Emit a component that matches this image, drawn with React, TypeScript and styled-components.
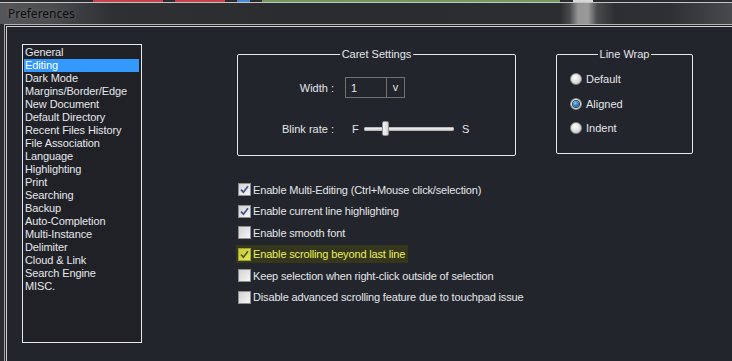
import React from "react";
import styled, { createGlobalStyle } from "styled-components";

const Global = createGlobalStyle`
  html, body { margin: 0; padding: 0; background: #22252b; }
  #root { width: 732px; height: 361px; overflow: hidden; }
`;

const Root = styled.div`
  width: 732px;
  height: 361px;
  overflow: hidden;
  display: flex;
  flex-direction: column;
  background: #2a2b2f;
  font-family: "Liberation Sans", Arial, sans-serif;
  font-size: 11px;
  color: #e4e6ea;
`;

const TopStrip = styled.div`
  height: 2px;
  flex: none;
  background: linear-gradient(
    90deg,
    #2c2c2e 0, #2c2c2e 93px,
    #c8404c 93px, #c8404c 163px,
    #2c2c2e 163px, #2c2c2e 175px,
    #c8404c 175px, #c8404c 225px,
    #2c2c2e 225px, #2c2c2e 237px,
    #4a86d8 237px, #4a86d8 250px,
    #2c2c2e 250px, #2c2c2e 262px,
    #6f9a5a 262px, #6f9a5a 560px,
    #2c2c2e 560px, #2c2c2e 573px,
    #d8d8d8 573px, #d8d8d8 593px,
    #2c2c2e 593px
  );
`;

const TopLine = styled.div`
  height: 1px;
  flex: none;
  background: #c4c4c4;
`;

const TitleBar = styled.div`
  height: 21px;
  flex: none;
  display: flex;
  align-items: center;
  padding-left: 8px;
  background: linear-gradient(
    90deg,
    #555659 0, #4c4d50 50px, #3a3b3f 85px, #2f3034 115px,
    #2a2c30 300px, #2b2d31 560px,
    #4a4b4e 570px, #969696 578px, #9a9a9a 588px,
    #4a4b4e 597px, #2c2e32 615px,
    #2e3034 670px, #48494c 732px
  );
`;

const Title = styled.span`
  font-family: "Noto Sans", "Liberation Sans", sans-serif;
  font-size: 12px;
  color: #0c0c0c;
  text-shadow: 0 0 5px rgba(255, 255, 255, 0.18);
`;

const Frame = styled.div`
  flex: 1;
  display: flex;
  margin-left: 4px;
  border-top: 1px solid #b4b4b4;
  border-left: 1px solid #a8a8a8;
  padding: 1px 0 0 1px;
  background: #1d1e22;
`;

const Client = styled.div`
  flex: 1;
  display: flex;
  align-items: flex-start;
  border-top: 1px solid #d2d2d2;
  border-left: 1px solid #cfcfcf;
  background: #22252b;
  padding: 17px 0 0 15px;
`;

const ListBox = styled.ul`
  list-style: none;
  margin: 0;
  width: 120px;
  height: 299px;
  box-sizing: border-box;
  border: 1px solid #e9e9e9;
  background: #1f2127;
  padding: 1px 2px 0 1px;
  flex: none;
  letter-spacing: -0.1px;
`;

const ListItem = styled.li<{ $selected?: boolean }>`
  height: 13px;
  line-height: 13px;
  padding-left: 1px;
  white-space: nowrap;
  color: ${(p) => (p.$selected ? "#ffffff" : "#e6e8ec")};
  background: ${(p) => (p.$selected ? "#3399ff" : "transparent")};
`;

const RightPane = styled.div`
  display: flex;
  flex-direction: column;
  margin-left: 95px;
  margin-top: 10px;
`;

const TopRow = styled.div`
  display: flex;
  align-items: flex-start;
  gap: 40px;
`;

const GroupBox = styled.div<{ $w: number; $h: number }>`
  position: relative;
  box-sizing: border-box;
  width: ${(p) => p.$w}px;
  height: ${(p) => p.$h}px;
  border: 1px solid #e8e8e8;
  border-radius: 2px;
`;

const Legend = styled.span`
  position: absolute;
  top: -7px;
  left: 50%;
  transform: translateX(-50%);
  padding: 0 2px;
  line-height: 13px;
  background: #22252b;
  white-space: nowrap;
`;

const CaretGrid = styled.div`
  display: grid;
  grid-template-columns: 96px auto;
  grid-template-rows: 21px 15px;
  column-gap: 11px;
  row-gap: 23px;
  padding-top: 22px;
`;

const FieldLabel = styled.span`
  align-self: center;
  text-align: right;
  white-space: nowrap;
`;

const Dropdown = styled.div`
  display: flex;
  width: 60px;
  height: 21px;
  box-sizing: border-box;
  border: 1px solid #707070;
`;

const DropValue = styled.span`
  width: 41px;
  padding-left: 5px;
  box-sizing: border-box;
  display: flex;
  align-items: center;
  border-right: 1px solid #707070;
`;

const DropArrow = styled.span`
  flex: 1;
  display: flex;
  align-items: center;
  justify-content: center;
  padding-bottom: 1px;
`;

const SliderRow = styled.div`
  display: flex;
  align-items: center;
`;

const SliderEnd = styled.span<{ $w: number; $ml: number }>`
  width: ${(p) => p.$w}px;
  margin-left: ${(p) => p.$ml}px;
  flex: none;
`;

const Slider = styled.div`
  position: relative;
  width: 90px;
  height: 15px;
  display: flex;
  align-items: center;
  flex: none;
`;

const Track = styled.div`
  width: 100%;
  height: 4px;
  box-sizing: border-box;
  background: linear-gradient(#f2f2f2, #cfcfcf);
  border: 1px solid #b8b8b8;
  border-radius: 1px;
`;

const Thumb = styled.div`
  position: absolute;
  top: 0;
  width: 7px;
  height: 15px;
  box-sizing: border-box;
  border: 1px solid #8c8c8c;
  border-radius: 2px;
  background: linear-gradient(90deg, #f6f6f6, #d6d6d6);
`;

const RadioList = styled.div`
  display: flex;
  flex-direction: column;
  gap: 12.5px;
  padding: 18px 0 0 13px;
`;

const RadioRow = styled.label`
  display: flex;
  align-items: center;
  gap: 4px;
  height: 12px;
  white-space: nowrap;
`;

const RadioDot = styled.span<{ $on?: boolean }>`
  width: 12px;
  height: 12px;
  box-sizing: border-box;
  border-radius: 50%;
  border: 1px solid #8a8a8a;
  background: radial-gradient(circle at 40% 35%, #ffffff 0, #e6e6e6 40%, #bdbdbd 100%);
  display: flex;
  align-items: center;
  justify-content: center;
  flex: none;
  &::after {
    content: "";
    display: ${(p) => (p.$on ? "block" : "none")};
    width: 6px;
    height: 6px;
    border-radius: 50%;
    background: radial-gradient(circle at 40% 35%, #7fd0ff 0, #2a86c8 45%, #0e3f6e 100%);
    box-shadow: 0 0 0 1px #3a4a5a;
  }
`;

const CheckList = styled.div`
  display: flex;
  flex-direction: column;
  margin-top: 23px;
`;

const CheckRow = styled.div`
  height: 21.5px;
  display: flex;
  align-items: center;
`;

const Check = styled.label<{ $hl?: boolean }>`
  display: inline-flex;
  align-items: center;
  gap: 2px;
  height: 18px;
  white-space: nowrap;
  letter-spacing: -0.15px;
  padding: 0 3px 0 2px;
  margin-left: -1px;
  background: ${(p) => (p.$hl ? "#34371b" : "transparent")};
  color: ${(p) => (p.$hl ? "#eeee5a" : "#e4e6ea")};
`;

const Box = styled.span<{ $hl?: boolean }>`
  width: 13px;
  height: 13px;
  box-sizing: border-box;
  border: 1px solid ${(p) => (p.$hl ? "#a0a032" : "#8e8e8e")};
  background: ${(p) =>
    p.$hl
      ? "linear-gradient(135deg, #c8c83a, #e6e65a)"
      : "linear-gradient(135deg, #d2d2d2, #f6f6f6)"};
  display: flex;
  align-items: center;
  justify-content: center;
  flex: none;
`;

const CheckMark = ({ hl }: { hl?: boolean }) => (
  <svg width="9" height="9" viewBox="0 0 9 9">
    <path
      d="M1 4.6 L3.4 7.2 L8 1.2"
      fill="none"
      stroke={hl ? "#5a5a18" : "#3e5489"}
      strokeWidth="1.7"
    />
  </svg>
);

const items = [
  "General",
  "Editing",
  "Dark Mode",
  "Margins/Border/Edge",
  "New Document",
  "Default Directory",
  "Recent Files History",
  "File Association",
  "Language",
  "Highlighting",
  "Print",
  "Searching",
  "Backup",
  "Auto-Completion",
  "Multi-Instance",
  "Delimiter",
  "Cloud & Link",
  "Search Engine",
  "MISC.",
];

const checks = [
  { text: "Enable Multi-Editing (Ctrl+Mouse click/selection)", on: true },
  { text: "Enable current line highlighting", on: true },
  { text: "Enable smooth font", on: false },
  { text: "Enable scrolling beyond last line", on: true, hl: true },
  { text: "Keep selection when right-click outside of selection", on: false },
  { text: "Disable advanced scrolling feature due to touchpad issue", on: false },
];

export default function App() {
  return (
    <Root>
      <Global />
      <TopStrip />
      <TopLine />
      <TitleBar>
        <Title>Preferences</Title>
      </TitleBar>
      <Frame>
        <Client>
          <ListBox>
            {items.map((it) => (
              <ListItem key={it} $selected={it === "Editing"}>
                {it}
              </ListItem>
            ))}
          </ListBox>
          <RightPane>
            <TopRow>
              <GroupBox $w={279} $h={102}>
                <Legend>Caret Settings</Legend>
                <CaretGrid>
                  <FieldLabel>Width :</FieldLabel>
                  <Dropdown>
                    <DropValue>1</DropValue>
                    <DropArrow>v</DropArrow>
                  </Dropdown>
                  <FieldLabel>Blink rate :</FieldLabel>
                  <SliderRow>
                    <SliderEnd $w={12} $ml={7}>F</SliderEnd>
                    <Slider>
                      <Track />
                      <Thumb style={{ left: 18 }} />
                    </Slider>
                    <SliderEnd $w={10} $ml={8}>S</SliderEnd>
                  </SliderRow>
                </CaretGrid>
              </GroupBox>
              <GroupBox $w={137} $h={100}>
                <Legend>Line Wrap</Legend>
                <RadioList>
                  <RadioRow>
                    <RadioDot />
                    Default
                  </RadioRow>
                  <RadioRow>
                    <RadioDot $on />
                    Aligned
                  </RadioRow>
                  <RadioRow>
                    <RadioDot />
                    Indent
                  </RadioRow>
                </RadioList>
              </GroupBox>
            </TopRow>
            <CheckList>
              {checks.map((c) => (
                <CheckRow key={c.text}>
                  <Check $hl={c.hl}>
                    <Box $hl={c.hl}>{c.on && <CheckMark hl={c.hl} />}</Box>
                    {c.text}
                  </Check>
                </CheckRow>
              ))}
            </CheckList>
          </RightPane>
        </Client>
      </Frame>
    </Root>
  );
}
